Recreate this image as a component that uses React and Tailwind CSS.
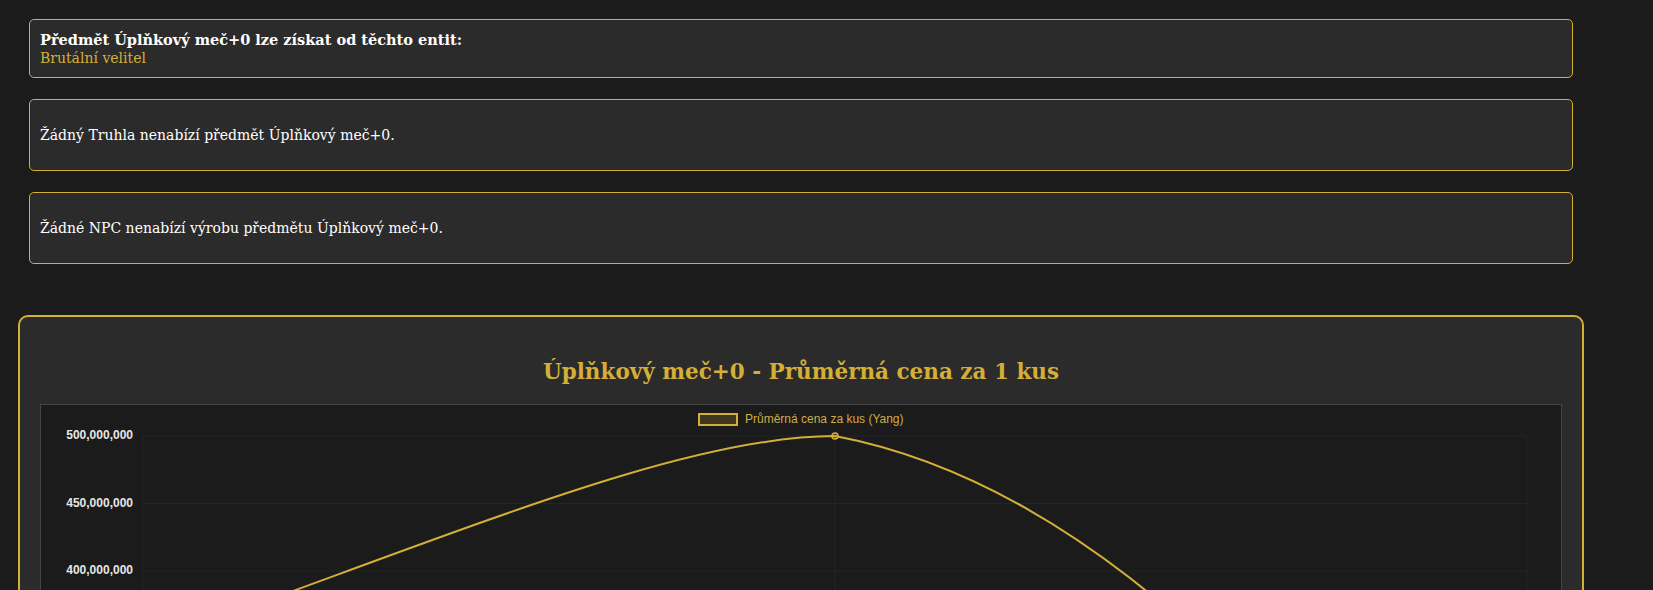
import React from 'react'

const gold = '#d4af37'

const yTicks = [
  { label: '500,000,000', y: 437 },
  { label: '450,000,000', y: 504.5 },
  { label: '400,000,000', y: 572 },
  { label: '350,000,000', y: 639.5 },
  { label: '300,000,000', y: 707 },
  { label: '250,000,000', y: 774.5 },
]

function PriceChart() {
  return (
    <div className="border border-[#444] bg-[#1b1b1b]">
      <svg
        width="1520"
        height="400"
        viewBox="41 406 1520 400"
        className="block"
        style={{ fontFamily: '"Liberation Sans", Arial, sans-serif' }}
      >
        {/* grid */}
        {yTicks.map((t) => (
          <line key={t.label} x1="143" x2="1527" y1={t.y} y2={t.y} stroke="#252525" strokeWidth="1" />
        ))}
        {[143, 835, 1527].map((x) => (
          <line key={x} x1={x} x2={x} y1="437" y2="806" stroke="#252525" strokeWidth="1" />
        ))}
        {/* y labels */}
        {yTicks.map((t) => (
          <text
            key={t.label + 'l'}
            x="133"
            y={t.y}
            textAnchor="end"
            dominantBaseline="middle"
            fontSize="12"
            fontWeight="bold"
            fill="#e6e6e6"
          >
            {t.label}
          </text>
        ))}
        {/* legend */}
        <rect x="699" y="415" width="38" height="11" fill="rgba(212,175,55,0.2)" stroke={gold} strokeWidth="2" />
        <text x="745" y="420.5" dominantBaseline="middle" fontSize="12" fill="#cfad45">
          Průměrná cena za kus (Yang)
        </text>
        {/* line */}
        <path
          d="M143,646 C450,538 680,437 835,437 Q1035,475 1235,671 T1527,1001"
          fill="none"
          stroke={gold}
          strokeWidth="2"
        />
        <circle cx="835" cy="437" r="3" fill="rgba(212,175,55,0.2)" stroke={gold} strokeWidth="1.5" />
      </svg>
    </div>
  )
}

function InfoBox({ children, className = '' }) {
  return (
    <div className={'border border-[#d4af37] rounded-[5px] bg-[#2b2b2b] px-[10px] ' + className}>
      {children}
    </div>
  )
}

export default function App() {
  return (
    <div
      className="min-h-screen bg-[#1b1b1b] pl-[18px] pr-[69px] pt-[19px] pb-10 text-white"
      style={{ fontFamily: 'Georgia, "DejaVu Serif", serif' }}
    >
      <div className="mx-[11px] flex flex-col gap-[21px]">
        <InfoBox className="pt-[10px] pb-[9px] text-[14px] leading-[19px]">
          <div className="text-[14.5px] font-bold text-white">Předmět Úplňkový meč+0 lze získat od těchto entit:</div>
          <div className="text-[#d4af37]">Brutální velitel</div>
        </InfoBox>
        <InfoBox className="py-[10px] text-[14px] leading-[18px]">
          <p className="my-4">Žádný Truhla nenabízí předmět Úplňkový meč+0.</p>
        </InfoBox>
        <InfoBox className="py-[10px] text-[14px] leading-[18px]">
          <p className="my-4">Žádné NPC nenabízí výrobu předmětu Úplňkový meč+0.</p>
        </InfoBox>
      </div>

      <section className="mt-[51px] rounded-[10px] border-2 border-[#d4af37] bg-[#2b2b2b] p-5">
        <h2 className="mt-[21px] mb-[18px] text-center text-[21.5px] font-bold leading-[28px] text-[#d4af37]">
          Úplňkový meč+0 - Průměrná cena za 1 kus
        </h2>
        <PriceChart />
      </section>
    </div>
  )
}
